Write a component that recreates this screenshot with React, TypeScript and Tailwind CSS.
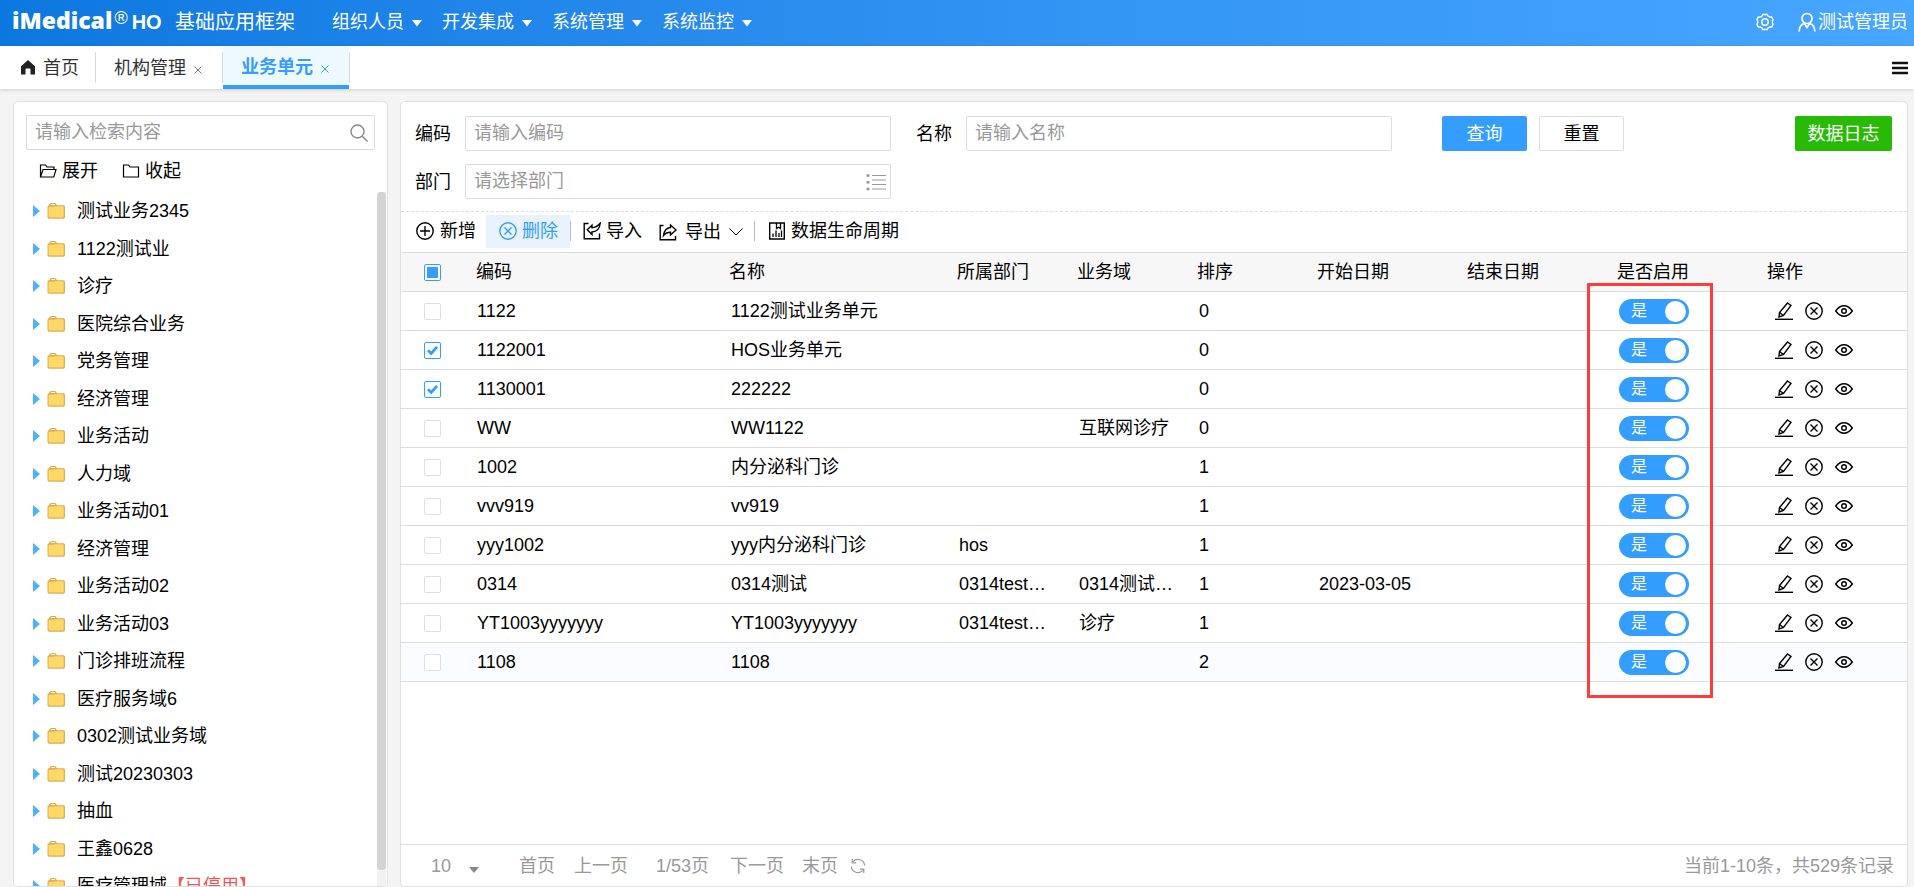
import React, { useState } from 'react';

const menus = ['组织人员', '开发集成', '系统管理', '系统监控'];

const treeNodes = [
  '测试业务2345',
  '1122测试业',
  '诊疗',
  '医院综合业务',
  '党务管理',
  '经济管理',
  '业务活动',
  '人力域',
  '业务活动01',
  '经济管理',
  '业务活动02',
  '业务活动03',
  '门诊排班流程',
  '医疗服务域6',
  '0302测试业务域',
  '测试20230303',
  '抽血',
  '王鑫0628',
];

interface Unit {
  code: string;
  name: string;
  dept?: string;
  domain?: string;
  sort: number;
  start?: string;
  end?: string;
}

const units: Unit[] = [
  { code: '1122', name: '1122测试业务单元', sort: 0 },
  { code: '1122001', name: 'HOS业务单元', sort: 0 },
  { code: '1130001', name: '222222', sort: 0 },
  { code: 'WW', name: 'WW1122', domain: '互联网诊疗', sort: 0 },
  { code: '1002', name: '内分泌科门诊', sort: 1 },
  { code: 'vvv919', name: 'vv919', sort: 1 },
  { code: 'yyy1002', name: 'yyy内分泌科门诊', dept: 'hos', sort: 1 },
  { code: '0314', name: '0314测试', dept: '0314test…', domain: '0314测试…', sort: 1, start: '2023-03-05' },
  { code: 'YT1003yyyyyyy', name: 'YT1003yyyyyyy', dept: '0314test…', domain: '诊疗', sort: 1 },
  { code: '1108', name: '1108', sort: 2 },
];

const Icon: React.FC<{ className?: string; children: React.ReactNode }> = ({ className = 'w-[18px] h-[18px]', children }) => (
  <svg viewBox="0 0 18 18" fill="none" stroke="currentColor" strokeWidth="1.4" className={`shrink-0 ${className}`} aria-hidden="true">
    {children}
  </svg>
);

const CloseCircle = () => (
  <Icon>
    <circle cx="9" cy="9" r="8.2" />
    <path d="M5.5 5.5l7 7M12.5 5.5l-7 7" />
  </Icon>
);

const FolderIcon = () => (
  <svg viewBox="0 0 20 18" className="w-5 h-[18px] shrink-0" aria-hidden="true">
    <path d="M1.500 5Q1.500 3.500 3 3.200L4 1.600Q4.400 1 5.200 1h3.600q.8 0 1.200.6L11 3.200h6.500Q19 3.200 19 4.700v10.300q0 1.800-1.800 1.800h-14Q1.500 16.800 1.500 15z" fill="#d9ae5c" />
    <path d="M2.500 6Q2.500 4.800 3.700 4.800h4L9 4.200h7.200q1.500 0 1.500 1.200v8.800q0 1.300-1.500 1.300H4Q2.500 15.500 2.500 14z" fill="#ffd866" />
    <path d="M5 2.500h4" stroke="#fff1c4" strokeWidth="1" />
  </svg>
);

const Checkbox: React.FC<{ checked: boolean; partial?: boolean; label: string; onChange: () => void }> = ({
  checked,
  partial,
  label,
  onChange,
}) => (
  <label className="relative block w-[17px] h-[17px]">
    <input
      type="checkbox"
      aria-label={label}
      checked={checked}
      onChange={onChange}
      className={`block appearance-none w-[17px] h-[17px] rounded-[2px] border bg-white ${
        checked || partial ? 'border-[#339eff]' : 'border-[#dcdfe6]'
      }`}
    />
    {partial && <span className="absolute left-[3px] top-[3px] w-[11px] h-[11px] bg-[#339eff] pointer-events-none" />}
    {checked && !partial && (
      <svg viewBox="0 0 17 17" className="absolute inset-0 pointer-events-none" fill="none" stroke="#339eff" strokeWidth="2.8">
        <path d="M4 8.200l3.200 3.300L13 4.800" />
      </svg>
    )}
  </label>
);

const Header = () => (
  <header className="flex items-center h-[46px] shrink-0 pl-3 pr-1.5 pb-0.5 text-white bg-linear-to-r from-[#0b78e0] via-[#2f92f2] to-[#47a6ff]">
    <div className="flex items-center w-[163px] pb-1">
      <span className="text-[23px] leading-8 font-extrabold font-['Open_Sans',sans-serif]">iMedical</span>
      <span className="text-[18px] leading-5 self-start mt-1 ml-0.5">®</span>
      <span className="text-[20px] font-bold ml-1 mt-1">HO</span>
    </div>
    <h1 className="text-[20px] w-[157px]">基础应用框架</h1>
    <nav className="flex">
      {menus.map(m => (
        <button key={m} className="flex items-center gap-2 w-[110px]">
          {m}
          <svg viewBox="0 0 10 7" className="w-2.5 h-[7px] mt-0.5" fill="currentColor">
            <path d="M0 0h10L5 6.500z" />
          </svg>
        </button>
      ))}
    </nav>
    <button className="ml-auto" aria-label="设置">
      <Icon>
        <path d="M6.800 1.500h4.400l.8 1.600 1.800 1 1.800-.1 1.500 2.600-.7 1.400v2l.7 1.400-1.500 2.600-1.800-.1-1.800 1-.8 1.600H6.800L6 14.900l-1.800-1-1.800.1-1.500-2.600.7-1.400V8l-.7-1.400L2.400 4l1.800.1 1.800-1z" />
        <circle cx="9" cy="9" r="3.200" />
      </Icon>
    </button>
    <button className="flex items-center gap-0.5 ml-6">
      <svg viewBox="0 0 18 20" className="w-[18px] h-5" fill="none" stroke="currentColor" strokeWidth="1.700">
        <circle cx="9" cy="6.500" r="5" />
        <path d="M1.200 19.500c0-4.500 2-7 5-8.200L9 15.500l2.800-4.200c3 1.200 5 3.700 5 8.200" />
      </svg>
      测试管理员
    </button>
  </header>
);

const TabBar = () => (
  <div className="flex h-[43px] shrink-0 bg-white text-[#333] shadow-[0_1px_4px_rgba(0,0,0,0.15)]">
    <div className="flex items-center my-1.5 pl-5 w-24 border-r border-[#d9d9d9]">
      <button className="flex items-center gap-[7px] whitespace-nowrap">
        <svg viewBox="0 0 16 15" className="w-4 h-[15px]" fill="#222">
          <path d="M8 0l7 6.200V14.500h-4.500V9.500q0-1-1-1h-3q-1 0-1 1v5H1V6.200z" />
        </svg>
        首页
      </button>
    </div>
    <div className="flex items-center my-1.5 pl-[18px] w-[127px] border-r border-[#d9d9d9]">
      <button>机构管理</button>
      <button aria-label="关闭机构管理" className="ml-2 mt-1 text-[#777]">
        <svg viewBox="0 0 8 8" className="w-2 h-2" stroke="currentColor"><path d="M.5.5l7 7M7.500.5l-7 7" /></svg>
      </button>
    </div>
    <div className="flex items-center pl-[18px] w-[126px] border-b-4 border-[#339eff] bg-[#eef8ff] text-[#339eff]">
      <button className="font-bold pt-0.5">业务单元</button>
      <button aria-label="关闭业务单元" className="ml-2 mt-1.5">
        <svg viewBox="0 0 8 8" className="w-2 h-2" stroke="currentColor"><path d="M.5.5l7 7M7.500.5l-7 7" /></svg>
      </button>
    </div>
    <span className="w-px my-1.5 bg-[#d9d9d9]" />
    <button aria-label="菜单" className="ml-auto mr-1.5">
      <svg viewBox="0 0 16 14" className="w-4 h-3.5" stroke="#111" strokeWidth="2.600"><path d="M0 2h16M0 7h16M0 12h16" /></svg>
    </button>
  </div>
);

const TreePanel = () => (
  <aside className="flex flex-col w-[375px] shrink-0 bg-white border border-[#e0e0e0] rounded-[5px] overflow-hidden">
    <div className="flex items-center mx-3 mt-[13px] h-[35px] border border-[#d9dce5] rounded-[2px]">
      <input
        aria-label="检索"
        placeholder="请输入检索内容"
        className="flex-1 min-w-0 h-full px-2 outline-none placeholder:text-[#999]"
      />
      <button aria-label="搜索" className="mr-1.5 text-[#888]">
        <Icon className="w-[18px] h-[18px]">
          <circle cx="7.500" cy="7.500" r="6.500" />
          <path d="M12 12l5.500 5.500" />
        </Icon>
      </button>
    </div>
    <div className="flex items-center gap-6 pl-[25px] h-[42px]">
      <button className="flex items-center gap-[5px]">
        <Icon>
          <path d="M1.500 15V3h5l1.500 2h7v2.500M1.500 15L4 7.500h13L14.800 15z" strokeWidth="1.200" />
        </Icon>
        展开
      </button>
      <button className="flex items-center gap-[5px]">
        <Icon>
          <path d="M1.500 3h5L8 5h8.500v10h-15z" strokeWidth="1.200" />
        </Icon>
        收起
      </button>
    </div>
    <div className="flex flex-1 min-h-0">
      <ul className="flex-1 min-w-0 pl-[19px] overflow-hidden">
        {treeNodes.map((n, i) => (
          <li key={i} className="flex items-center odd:h-[38px] even:h-[37px]">
            <svg viewBox="0 0 7 12" className="w-[7px] h-3 mr-1.5" fill="#4db1ff"><path d="M0 0l7 6-7 6z" /></svg>
            <FolderIcon />
            <span className="ml-[11px]">{n}</span>
          </li>
        ))}
        <li className="flex items-center h-[37px]">
          <svg viewBox="0 0 7 12" className="w-[7px] h-3 mr-1.5" fill="#4db1ff"><path d="M0 0l7 6-7 6z" /></svg>
          <FolderIcon />
          <span className="ml-[11px]">医疗管理域</span>
          <span className="text-[#f25555]">【已停用】</span>
        </li>
      </ul>
      <div className="w-[9px] mr-[1px] pb-4 bg-[#f1f1f1]">
        <div className="h-full rounded-[4px] bg-[#d3d3d3]" />
      </div>
    </div>
  </aside>
);

const SearchForm = () => (
  <form className="flex items-start pt-3.5 pb-3 pl-3.5 pr-[15px] border-b border-dashed border-[#ddd]" onSubmit={e => e.preventDefault()}>
    <div className="grid grid-cols-[50px_426px] gap-y-[13px] items-center">
      <label htmlFor="code">编码</label>
      <input id="code" placeholder="请输入编码" className="h-[35px] px-2 border border-[#d9dce5] rounded-[2px] outline-none placeholder:text-[#999]" />
      <label htmlFor="dept">部门</label>
      <div className="flex items-center h-[35px] border border-[#d9dce5] rounded-[2px]">
        <input id="dept" placeholder="请选择部门" className="flex-1 min-w-0 h-full px-2 outline-none placeholder:text-[#999]" />
        <svg viewBox="0 0 20 18" className="w-5 h-[18px] mr-1" stroke="#999" strokeWidth="1.200" aria-hidden="true">
          <path d="M6 2.500h14M6 7h14M6 11.500h14M6 16h14" />
          <path d="M.5 2.500h3M.5 9.200h3M.5 16h3" strokeWidth="2.400" />
        </svg>
      </div>
    </div>
    <div className="grid grid-cols-[50px_426px] items-center ml-[25px]">
      <label htmlFor="name">名称</label>
      <input id="name" placeholder="请输入名称" className="h-[35px] px-2 border border-[#d9dce5] rounded-[2px] outline-none placeholder:text-[#999]" />
    </div>
    <button className="ml-[50px] w-[85px] h-[35px] rounded-[2px] bg-[#339eff] text-white">查询</button>
    <button type="reset" className="ml-3 w-[85px] h-[35px] rounded-[2px] border border-[#d9dce5]">重置</button>
    <button type="button" className="ml-auto w-[97px] h-[35px] rounded-[2px] bg-[#28ba05] text-white">数据日志</button>
  </form>
);

const Toolbar = () => (
  <div className="flex items-center h-10 pl-[15px] pb-0.5">
    <button className="flex items-center gap-1.5 w-[70px]">
      <Icon>
        <circle cx="9" cy="9" r="8.200" />
        <path d="M9 4v10M4 9h10" />
      </Icon>
      新增
    </button>
    <button className="flex items-center gap-[5px] w-[84px] h-[33px] pl-[13px] bg-[#e8f3ff] text-[#339eff]">
      <CloseCircle />
      删除
    </button>
    <span className="w-px h-5 bg-[#bbb]" />
    <button className="flex items-center gap-[5px] ml-3">
      <Icon>
        <path d="M5.500 1.500H1.200v15.300h15.300V11.500" />
        <path d="M4.300 7.800L9 3.200v2.500Q13.500 5.700 17.200 1.300 16.500 9.500 9 10v2.600z" />
      </Icon>
      导入
    </button>
    <button className="flex items-center gap-2 ml-[17px] pt-0.5">
      <Icon>
        <path d="M4.500 2.500H1.200v14.300h15.300V13" />
        <path d="M17 7L11.500 2v2.500Q5.500 5 4.500 12.500 7 9.300 11.500 9.300V12z" />
      </Icon>
      导出
      <svg viewBox="0 0 14 8" className="w-3.5 h-2" fill="none" stroke="currentColor"><path d="M.5.5L7 7l6.500-6.500" /></svg>
    </button>
    <span className="w-px h-5 bg-[#bbb] ml-[11px]" />
    <button className="flex items-center gap-[5px] ml-[13px]">
      <Icon>
        <path d="M1.700 1h14.600v16H1.700z" />
        <path d="M5 15v-3.500M8 15V8.500M11 15v-4M13.500 15V8.500M8.500 1v5.500l2-1.300 2 1.300V1" strokeWidth="1.300" />
      </Icon>
      数据生命周期
    </button>
  </div>
);

const UnitTable = () => {
  const [selected, setSelected] = useState<string[]>(['1122001', '1130001']);
  const [disabled, setDisabled] = useState<string[]>([]);

  const toggle = (list: string[], code: string) =>
    list.includes(code) ? list.filter(c => c !== code) : [...list, code];

  const all = selected.length === units.length;

  return (
    <div className="relative">
      <table className="w-full table-fixed border-collapse text-left">
        <colgroup>
          <col className="w-[65px]" />
          <col className="w-[253px]" />
          <col className="w-[228px]" />
          <col className="w-[120px]" />
          <col className="w-[120px]" />
          <col className="w-[120px]" />
          <col className="w-[150px]" />
          <col className="w-[150px]" />
          <col className="w-[150px]" />
          <col />
        </colgroup>
        <thead>
          <tr className="h-[39px] bg-[#f7f7f7] border-y border-[#ddd]">
            <th className="pl-[23px]">
              <Checkbox
                label="全选"
                checked={all}
                partial={selected.length > 0 && !all}
                onChange={() => setSelected(all ? [] : units.map(u => u.code))}
              />
            </th>
            {['编码', '名称', '所属部门', '业务域', '排序', '开始日期', '结束日期', '是否启用', '操作'].map(h => (
              <th key={h} className="px-2.5 font-normal">{h}</th>
            ))}
          </tr>
        </thead>
        <tbody>
          {units.map(u => (
            <tr key={u.code} className="h-[39px] border-b border-[#ddd] last:bg-[#fafcff]">
              <td className="pl-[23px]">
                <Checkbox
                  label={`选择${u.code}`}
                  checked={selected.includes(u.code)}
                  onChange={() => setSelected(toggle(selected, u.code))}
                />
              </td>
              <td className="px-[11px]">{u.code}</td>
              <td className="px-3">{u.name}</td>
              <td className="px-3 whitespace-nowrap">{u.dept}</td>
              <td className="px-3 whitespace-nowrap">{u.domain}</td>
              <td className="px-3">{u.sort}</td>
              <td className="px-3">{u.start}</td>
              <td className="px-3">{u.end}</td>
              <td className="px-3">
                <button
                  role="switch"
                  aria-checked={!disabled.includes(u.code)}
                  onClick={() => setDisabled(toggle(disabled, u.code))}
                  className={`flex items-center justify-between w-[70px] h-[25px] pl-3 pr-[3px] rounded-full text-[16px] leading-6 text-white ${
                    disabled.includes(u.code) ? 'flex-row-reverse bg-[#bbb]' : 'bg-[#339eff]'
                  }`}
                >
                  {disabled.includes(u.code) ? '否' : '是'}
                  <span className="w-[21px] h-[21px] rounded-full bg-white" />
                </button>
              </td>
              <td className="pl-[18px]">
                <div className="flex items-center gap-3">
                  <button aria-label="编辑">
                    <Icon>
                      <path d="M0 17.300h18" />
                      <path d="M12.500 1l3.500 2.500-7.500 10L4 15l.5-4.500zM4.500 10.500l4 3" />
                    </Icon>
                  </button>
                  <button aria-label="删除"><CloseCircle /></button>
                  <button aria-label="查看">
                    <Icon>
                      <path d="M.7 9Q4.500 3.800 9 3.800T17.300 9Q13.500 14.200 9 14.200T.7 9z" />
                      <circle cx="9" cy="9" r="2.300" />
                    </Icon>
                  </button>
                </div>
              </td>
            </tr>
          ))}
        </tbody>
      </table>
      {/* highlight around the enable switches */}
      <div className="absolute left-[1186px] top-[31px] w-[126px] h-[415px] border-[3px] border-[#ff3b3b] pointer-events-none" />
    </div>
  );
};

const Pager = () => (
  <footer className="flex items-center h-[42px] pl-[30px] pr-[13px] mt-auto border-t border-[#ddd] text-[#999]">
    <div className="relative w-[88px]">
      <select aria-label="每页条数" className="appearance-none w-14 outline-none" defaultValue="10">
        <option>10</option>
        <option>20</option>
        <option>50</option>
      </select>
      <svg viewBox="0 0 10 6" className="absolute left-[38px] top-[14px] w-2.5 h-1.5 pointer-events-none" fill="#888">
        <path d="M0 0h10L5 6z" />
      </svg>
    </div>
    <button>首页</button>
    <button className="ml-[19px]">上一页</button>
    <span className="ml-7">1/53页</span>
    <button className="ml-[21px]">下一页</button>
    <button className="ml-[18px]">末页</button>
    <button className="ml-3" aria-label="刷新">
      <Icon className="w-4 h-4">
        <path d="M3.500 4A7.500 7.500 0 0 1 16.500 8.500M14.500 14A7.500 7.500 0 0 1 1.500 9.500" />
        <path d="M2.500 1v4.500H7M15.500 17v-4.500H11" />
      </Icon>
    </button>
    <span className="ml-auto">当前1-10条，共529条记录</span>
  </footer>
);

export default function App() {
  return (
    <div className="flex flex-col h-screen overflow-hidden bg-[#f4f4f4] text-black text-[18px] leading-[26px] font-['Liberation_Sans','Noto_Sans_CJK_SC',sans-serif]">
      <Header />
      <TabBar />
      <main className="flex flex-1 min-h-0 gap-3 pt-3 pl-[13px] pr-1.5">
        <TreePanel />
        <section className="flex flex-col flex-1 min-w-0 bg-white border border-[#e0e0e0] rounded-[5px] overflow-hidden">
          <SearchForm />
          <Toolbar />
          <UnitTable />
          <Pager />
        </section>
      </main>
    </div>
  );
}
